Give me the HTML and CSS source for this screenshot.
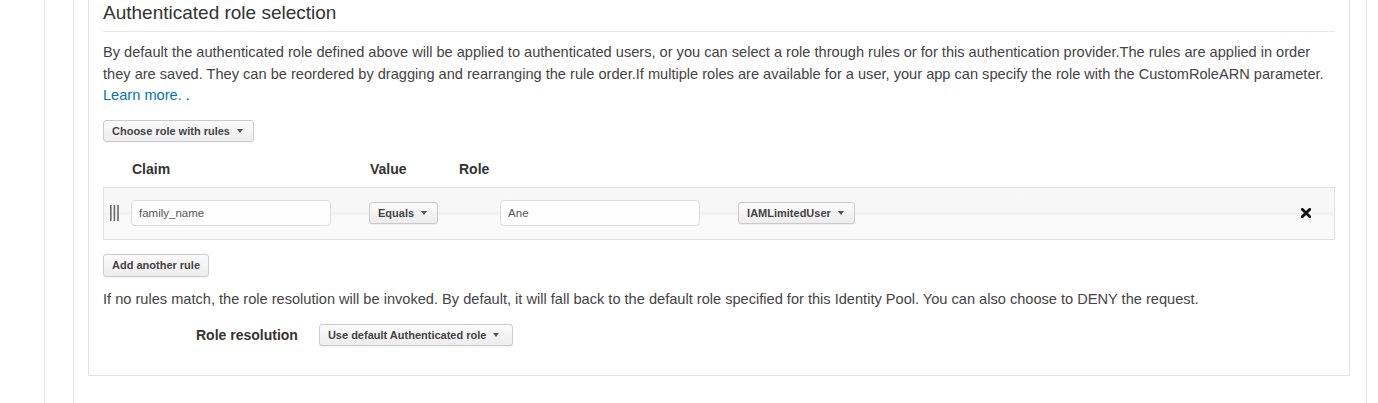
FILE: index.html
```html
<!DOCTYPE html>
<html lang="en">
<head>
<meta charset="utf-8">
<title>Authenticated role selection</title>
<link rel="stylesheet" href="styles.css">
</head>
<body>
<div class="frame">
  <div class="inner">
    <section class="panel">
      <h2 class="panel-title">Authenticated role selection</h2>
      <p class="desc">By default the authenticated role defined above will be applied to authenticated users, or you can select a role through rules or for this authentication provider.The rules are applied in order they are saved. They can be reordered by dragging and rearranging the rule order.If multiple roles are available for a user, your app can specify the role with the CustomRoleARN parameter. <a class="link" href="#">Learn more.</a>&nbsp;.</p>

      <button class="btn" type="button">Choose role with rules <span class="caret"></span></button>

      <div class="col-heads">
        <span class="col-claim">Claim</span>
        <span class="col-value">Value</span>
        <span class="col-role">Role</span>
      </div>

      <div class="rule-row">
        <svg class="handle" width="9" height="16" viewBox="0 0 9 16" aria-hidden="true">
          <rect x="0" y="0" width="1.6" height="16" fill="#6b6b6b"/>
          <rect x="3.6" y="0" width="1.6" height="16" fill="#6b6b6b"/>
          <rect x="7.2" y="0" width="1.6" height="16" fill="#6b6b6b"/>
        </svg>
        <input class="field field-claim" type="text" value="family_name">
        <button class="btn btn-equals" type="button">Equals <span class="caret"></span></button>
        <input class="field field-value" type="text" value="Ane">
        <button class="btn btn-role" type="button">IAMLimitedUser <span class="caret"></span></button>
        <svg class="remove" width="10" height="10" viewBox="0 0 10 10" aria-hidden="true">
          <path d="M1.4 1.4 L8.6 8.6 M8.6 1.4 L1.4 8.6" stroke="#111" stroke-width="2.8" stroke-linecap="square"/>
        </svg>
      </div>

      <button class="btn btn-add" type="button">Add another rule</button>

      <p class="desc desc-fallback">If no rules match, the role resolution will be invoked. By default, it will fall back to the default role specified for this Identity Pool. You can also choose to DENY the request.</p>

      <div class="resolution">
        <span class="resolution-label">Role resolution</span>
        <button class="btn btn-resolution" type="button">Use default Authenticated role <span class="caret"></span></button>
      </div>
    </section>
  </div>
</div>
</body>
</html>
```

FILE: styles.css
```css
* { box-sizing: border-box; }

html, body {
  margin: 0;
  padding: 0;
  background: #ffffff;
}

body {
  font-family: "Liberation Sans", Arial, Helvetica, sans-serif;
  color: #444444;
  height: 403px;
  overflow: hidden;
}

.frame {
  margin-left: 44px;
  border-left: 1px solid #e6e6e6;
  padding-left: 28px;
  height: 403px;
}

.inner {
  width: 1294px;
  height: 403px;
  border-left: 1px solid #e6e6e6;
  border-right: 1px solid #e6e6e6;
}

.panel {
  margin: 0 16px 0 14px;
  border: 1px solid #e2e2e2;
  border-top: none;
  padding: 0 14px 29px;
}

.panel-title {
  margin: 0;
  padding: 1px 0 6px;
  font-size: 19px;
  line-height: 24px;
  font-weight: normal;
  color: #333333;
  border-bottom: 1px solid #e8e8e8;
}

.desc {
  margin: 10px 0 13px;
  font-size: 14.6px;
  line-height: 21.5px;
  color: #444444;
}

.link {
  color: #0073bb;
  text-decoration: none;
}

.btn {
  display: inline-flex;
  align-items: center;
  height: 22px;
  padding: 0 10px 0 8px;
  border: 1px solid #cbcbcb;
  border-radius: 3px;
  background: linear-gradient(to bottom, #fbfbfb 0%, #ededed 100%);
  font-family: "Liberation Sans", Arial, Helvetica, sans-serif;
  font-size: 11px;
  font-weight: bold;
  color: #444444;
  cursor: pointer;
  white-space: nowrap;
  box-shadow: 0 1px 0 rgba(0, 0, 0, 0.04);
}

.caret {
  display: inline-block;
  width: 0;
  height: 0;
  margin-left: 7px;
  border-left: 3.5px solid transparent;
  border-right: 3.5px solid transparent;
  border-top: 4px solid #555555;
}

.col-heads {
  display: flex;
  margin-top: 17px;
  height: 20px;
  line-height: 20px;
  font-size: 14px;
  font-weight: bold;
  color: #333333;
}

.col-claim { margin-left: 29px; width: 238px; }
.col-value { width: 89px; }

.rule-row {
  display: flex;
  align-items: center;
  margin-top: 8px;
  height: 53px;
  border: 1px solid #e0e0e0;
  background: linear-gradient(to bottom, #f8f8f8 0%, #f7f7f7 46%, #f1f1f1 50%, #fafafa 56%, #fafafa 100%);
}

.handle {
  margin-left: 6px;
  flex: none;
}

.field {
  height: 26px;
  width: 200px;
  border: 1px solid #dddddd;
  border-radius: 4px;
  background: #fefefe;
  padding: 0 7px;
  font-family: "Liberation Sans", Arial, Helvetica, sans-serif;
  font-size: 11.5px;
  color: #555555;
  outline: none;
}

.field-claim { margin-left: 12px; }
.btn-equals { margin-left: 38px; }
.field-value { margin-left: 62px; }
.btn-role { margin-left: 38px; }

.remove {
  margin-left: auto;
  margin-right: 23px;
  flex: none;
}

.btn-add {
  margin-top: 14px;
  height: 23px;
  padding-right: 8px;
}

.desc-fallback {
  margin: 12px 0 14px;
}

.resolution {
  display: flex;
  align-items: center;
  height: 22px;
  padding-left: 93px;
}

.resolution-label {
  font-size: 14px;
  line-height: 22px;
  font-weight: bold;
  color: #333333;
  margin-right: 21px;
}

.btn-resolution {
  padding-right: 13px;
}
```
